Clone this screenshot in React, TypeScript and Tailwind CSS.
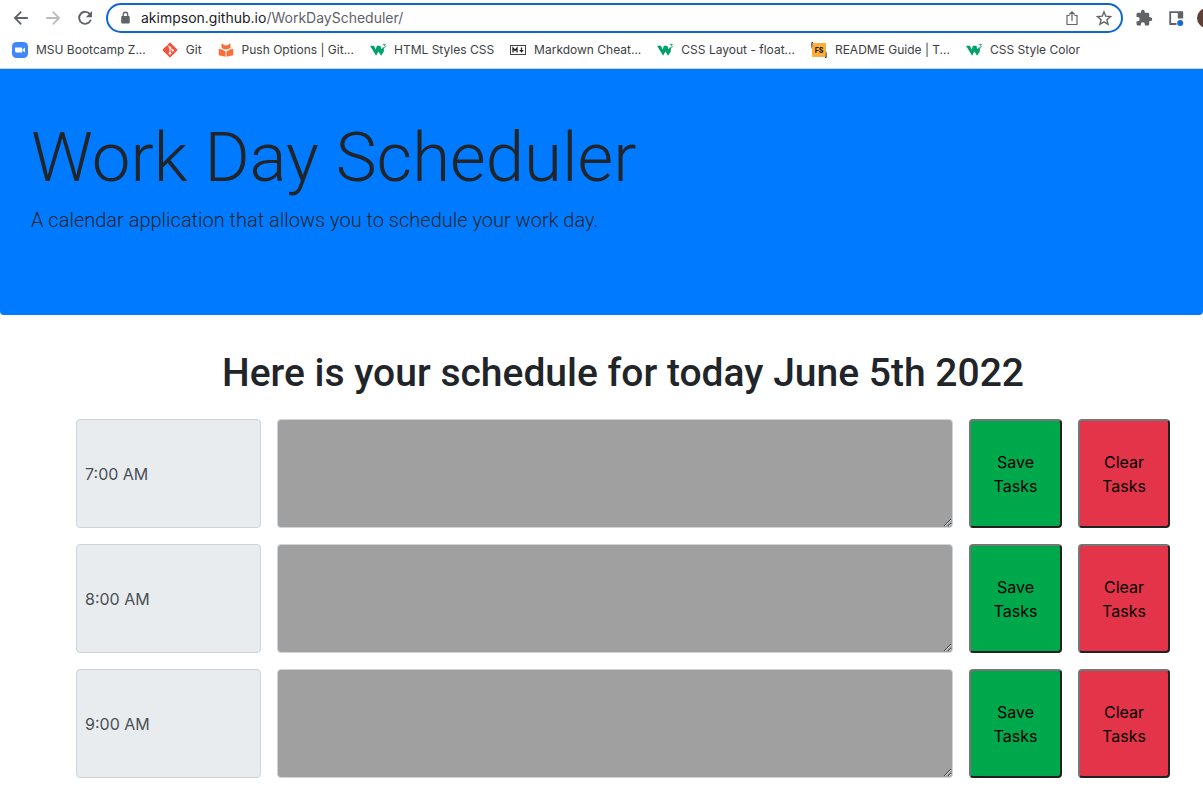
import type { ReactNode } from "react";

function ZoomIcon() {
  return (
    <svg viewBox="0 0 16 16" className="size-4 shrink-0" aria-hidden="true">
      <rect width="16" height="16" rx="4.5" fill="#4087fc" />
      <path d="M3 5.4h5.8c.9 0 1.5.6 1.5 1.5v3.7H4.6c-.9 0-1.6-.6-1.6-1.5z" fill="#fff" />
      <path d="M10.8 7.2 13 5.6v4.8l-2.2-1.6z" fill="#fff" />
    </svg>
  );
}

function GitIcon() {
  return (
    <svg viewBox="0 0 16 16" className="size-4 shrink-0" aria-hidden="true">
      <rect x="2.5" y="2.5" width="11" height="11" rx="1" transform="rotate(45 8 8)" fill="#f4513a" />
      <path d="M5.6 3.2 8 5.6v5.6M8 5.8l2.8 2.6" stroke="#fff" strokeWidth="1" fill="none" />
      <circle cx="8" cy="5.6" r="1.2" fill="#fff" />
      <circle cx="8" cy="11.2" r="1.2" fill="#fff" />
      <circle cx="10.8" cy="8.4" r="1.2" fill="#fff" />
    </svg>
  );
}

function ReaderIcon() {
  return (
    <svg viewBox="0 0 16 16" className="size-4 shrink-0" aria-hidden="true">
      <path d="M3.800 1 6.300 3.200h3.400L12.200 1l.4 3.800C12.400 6.600 10.300 7.600 8 7.600S3.600 6.600 3.400 4.800z" fill="#fc6d3a" />
      <path d="M.8 7 3.600 7.200 7.500 9.400v5.300L.8 13.300zM15.200 7l-2.800.2L8.500 9.400v5.300l6.700-1.400z" fill="#fc6d3a" />
    </svg>
  );
}

function W3Icon() {
  return (
    <svg viewBox="0 0 16 16" className="size-4 shrink-0" aria-hidden="true">
      <path d="M0 3.800h4L5.600 7.400l1.300-3.600h3.400l1.200 3.400 1.200-1.500 1.300.5-.2 3.200-2.700 4.400L8.400 9.600l-2.300 4.200z" fill="#04a06c" />
      <path d="M12.800 2.300h2.500l-1.200 1.300c1.700 0 1.600 2.200-.2 2.200-.6 0-1-.2-1.200-.6" fill="none" stroke="#04a06c" strokeWidth=".9" />
    </svg>
  );
}

function MarkdownIcon() {
  return (
    <svg viewBox="0 0 16 16" className="size-4 shrink-0" aria-hidden="true">
      <rect x=".5" y="3.500" width="15" height="9" fill="#fff" stroke="#444" />
      <path d="M3 10.500V6l2 2.500L7 6v4.500M11.500 5.500v3" fill="none" stroke="#222" strokeWidth="1.300" />
      <path d="M9.200 8h4.600l-2.300 2.800z" fill="#222" />
    </svg>
  );
}

function FsIcon() {
  return (
    <svg viewBox="0 0 16 16" className="size-4 shrink-0" aria-hidden="true">
      <rect x="1" y="1" width="14" height="14" fill="#ffaf37" />
      <path d="M2 .5H.8v4L0 5.500l.8.8M14 15.500h1.200v-4l.8-1-.8-.8" fill="none" stroke="#222" strokeWidth=".9" />
      <text x="8" y="10.500" textAnchor="middle" fontSize="7" fontWeight="800" fontFamily="Inter, sans-serif" fill="#222">FS</text>
    </svg>
  );
}

const bookmarks: { label: string; icon: ReactNode }[] = [
  { label: "MSU Bootcamp Z...", icon: <ZoomIcon /> },
  { label: "Git", icon: <GitIcon /> },
  { label: "Push Options | Git...", icon: <ReaderIcon /> },
  { label: "HTML Styles CSS", icon: <W3Icon /> },
  { label: "Markdown Cheat...", icon: <MarkdownIcon /> },
  { label: "CSS Layout - float...", icon: <W3Icon /> },
  { label: "README Guide | T...", icon: <FsIcon /> },
  { label: "CSS Style Color", icon: <W3Icon /> },
];

function Toolbar() {
  return (
    <div className="flex h-9 items-center overflow-hidden pl-[13px] text-[#5f6368]">
      <button type="button" aria-label="Back" className="mr-4 shrink-0">
        <svg viewBox="0 0 16 16" className="size-4" fill="none" stroke="currentColor" strokeWidth="1.800">
          <path d="M14.800 8H2.500M8.200 1.700 1.900 8l6.300 6.300" />
        </svg>
      </button>
      <button type="button" aria-label="Forward" className="mr-4 shrink-0 text-[#babcbe]">
        <svg viewBox="0 0 16 16" className="size-4" fill="none" stroke="currentColor" strokeWidth="1.800">
          <path d="M1.200 8H13.500M7.800 1.700 14.100 8l-6.300 6.300" />
        </svg>
      </button>
      <button type="button" aria-label="Reload" className="mr-[13px] shrink-0">
        <svg viewBox="0 0 16 16" className="size-4" fill="none" stroke="currentColor" strokeWidth="1.900">
          <path d="M13 4.300A6 6 0 1 0 13.800 9.800" />
          <path d="M15 1v6.200H8.800z" fill="currentColor" stroke="none" />
        </svg>
      </button>
      <div className="flex h-[30px] min-w-0 flex-1 items-center rounded-full border-2 border-[#0f66cf] bg-white pr-[9px] pl-3">
        <svg viewBox="0 0 12 14" className="h-3.5 w-3 shrink-0" aria-hidden="true">
          <rect x="1.200" y="5" width="8.500" height="7.500" rx="1" fill="#5f6368" />
          <path d="M3.200 5V3.500a2.250 2.250 0 0 1 4.500 0V5" fill="none" stroke="#5f6368" strokeWidth="1.300" />
        </svg>
        <div className="relative ml-[9px] flex min-w-0 flex-1 items-center text-sm">
          <input
            aria-label="Address"
            defaultValue="akimpson.github.io/WorkDayScheduler/"
            className="w-full bg-transparent text-transparent caret-black outline-none"
          />
          <span aria-hidden="true" className="pointer-events-none absolute left-0 text-[#5f6368]">
            <span className="text-[#202124]">akimpson.github.io</span>/WorkDayScheduler/
          </span>
        </div>
        <button type="button" aria-label="Share" className="mr-4 shrink-0">
          <svg viewBox="0 0 16 16" className="size-4" fill="none" stroke="currentColor" strokeWidth="1.200">
            <path d="M5.500 5.500H3v9h10v-9h-2.500M8 11V2M5.300 4.500 8 1.800l2.700 2.700" />
          </svg>
        </button>
        <button type="button" aria-label="Bookmark this page" className="shrink-0">
          <svg viewBox="0 0 16 16" className="size-4" fill="none" stroke="currentColor" strokeWidth="1.400">
            <path d="m8 1.900 1.800 4.300 4.700.4-3.600 3.100 1.100 4.600L8 11.900l-4 2.400 1.100-4.600L1.500 6.600l4.700-.4z" />
          </svg>
        </button>
      </div>
      <button type="button" aria-label="Extensions" className="ml-3 shrink-0">
        <svg viewBox="0 0 24 24" className="size-[18px]" fill="currentColor">
          <path d="M20.500 11H19V7c0-1.100-.9-2-2-2h-4V3.500a2.500 2.500 0 0 0-5 0V5H4c-1.100 0-2 .9-2 2v3.800h1.500a2.700 2.700 0 0 1 0 5.400H2V20c0 1.100.9 2 2 2h3.800v-1.500a2.700 2.700 0 0 1 5.400 0V22H17c1.100 0 2-.9 2-2v-4h1.500a2.500 2.500 0 0 0 0-5z" />
        </svg>
      </button>
      <button type="button" aria-label="Side panel" className="ml-[15px] shrink-0">
        <svg viewBox="0 0 16 16" className="size-4">
          <path d="M8.500 14H2.200V2.200h12V8" fill="none" stroke="currentColor" strokeWidth="1.800" />
          <path d="M9.800 2h5.300v6.500H9.800z" fill="currentColor" />
          <circle cx="12.200" cy="13" r="3" fill="#1967d2" />
        </svg>
      </button>
      <button type="button" aria-label="Profile" className="-mr-[14px] ml-[13px] size-5 shrink-0 rounded-full bg-[#5d4037]" />
    </div>
  );
}

const hours = ["7:00 AM", "8:00 AM", "9:00 AM"];

export default function App() {
  return (
    <div className="min-h-screen bg-white font-['Inter',sans-serif] text-[#212529]">
      <header className="border-b border-[#d0d3d6]">
        <Toolbar />
        <nav aria-label="Bookmarks" className="flex h-8 items-center gap-4 overflow-hidden px-3 pb-1 text-xs text-[#3c4043]">
          {bookmarks.map((b) => (
            <a key={b.label} href="#" className="flex shrink-0 items-center gap-2 whitespace-nowrap">
              {b.icon}
              {b.label}
            </a>
          ))}
        </nav>
      </header>
      <main>
        <section className="rounded-b bg-[#007bff] px-[31px] pt-[46px] pb-20 font-['Roboto',sans-serif]">
          <h1 className="text-[69px] leading-[86px] font-light">Work Day Scheduler</h1>
          <p className="mt-1 text-xl leading-[30px] font-light">
            A calendar application that allows you to schedule your work day.
          </p>
        </section>
        <h2 className="mt-[34px] ml-[43px] text-center font-['Roboto',sans-serif] text-[39px] leading-12 font-medium">
          Here is your schedule for today June 5th 2022
        </h2>
        <div className="mt-[22px] mr-[33px] ml-19 flex flex-col gap-4 pb-3">
          {hours.map((hour) => {
            const id = "task-" + parseInt(hour);
            return (
              <form key={hour} onSubmit={(e) => e.preventDefault()} className="grid h-[109px] grid-cols-[185fr_676fr_93fr_92fr] gap-4">
                <label htmlFor={id} className="flex items-center rounded border border-[#ced4da] bg-[#e9ecef] px-2 text-[#495057]">
                  {hour}
                </label>
                <textarea id={id} className="h-full w-full resize rounded border border-[#ced4da] bg-[#a0a0a0] px-3 py-2" />
                <button type="submit" className="rounded border-2 border-t-[#767676] border-r-[#212121] border-b-[#212121] border-l-[#767676] bg-[#00a84c] px-4 leading-6 text-black">
                  Save Tasks
                </button>
                <button type="reset" className="rounded border-2 border-t-[#767676] border-r-[#212121] border-b-[#212121] border-l-[#767676] bg-[#e3344a] px-4 leading-6 text-black">
                  Clear Tasks
                </button>
              </form>
            );
          })}
        </div>
      </main>
    </div>
  );
}
